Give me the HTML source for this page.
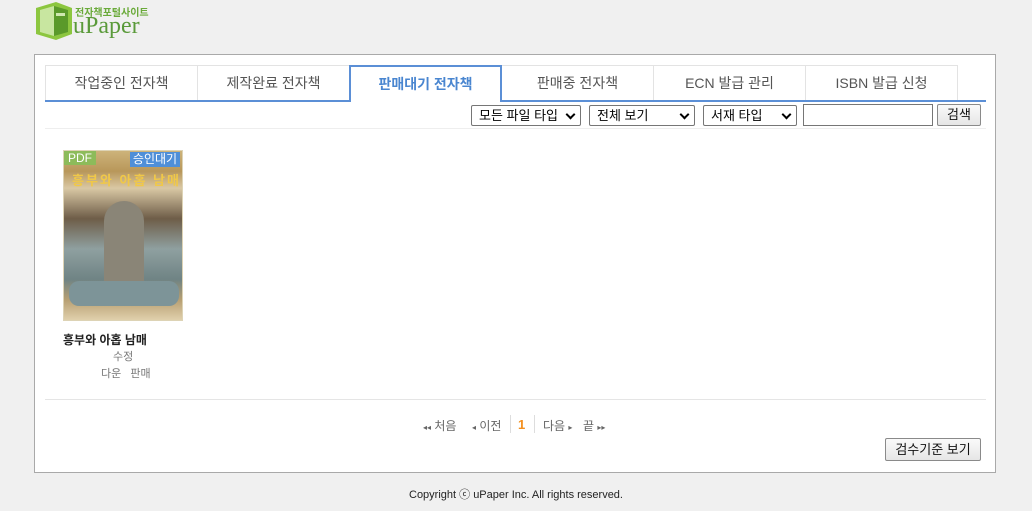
<!DOCTYPE html><html><head><meta charset="utf-8"><style>
*{box-sizing:border-box;margin:0;padding:0}
body{width:1032px;height:511px;background:#f0f0f0;font-family:"Liberation Sans","Noto Sans CJK KR",sans-serif;font-size:12px;color:#333;position:relative;overflow:hidden}
.abs{position:absolute}
.box{left:34px;top:54px;width:962px;height:419px;background:#fff;border:1px solid #a9a9a9}
.tab{top:65px;height:36px;width:153px;border:1px solid #e3e3e3;border-bottom:none;background:#fff;text-align:center;line-height:34px;font-size:14px;color:#555}
.tab.act{border:2px solid #5b8fd6;border-bottom:none;color:#4a86d0;font-weight:bold;height:37px;background:#fff;z-index:2}
.sel{top:105px;height:21px;border:1px solid #767676;border-radius:2px;background:#fff;font-size:13px;padding-left:7px;line-height:19px;color:#000}
.sel:after{content:"";position:absolute;right:6px;top:5px;width:5px;height:5px;border-right:2px solid #000;border-bottom:2px solid #000;transform:rotate(45deg)}
.btn{border:1px solid #8a8a8a;border-radius:2px;background:linear-gradient(#fafafa,#e6e6e6);text-align:center;font-size:13px;color:#111}
.pg{position:absolute;top:417px;font-size:12px;color:#666;white-space:nowrap}
</style></head><body>
<svg class="abs" style="left:34px;top:0" width="40" height="40" viewBox="0 0 40 40"><polygon points="2,8 22,2 38,8 38,34 22,40 2,34" fill="#8cc63f"/><polygon points="6,10 20,6 20,36 6,32" fill="#c8e6a0"/><polygon points="20,6 34,10 34,32 20,36" fill="#5a9a2a"/><rect x="22" y="13" width="9" height="3" fill="#cfe8b0"/></svg>
<div class="abs" style="left:75px;top:4px;font-size:10px;font-weight:bold;color:#6aaa3a">전자책포털사이트</div>
<div class="abs" style="left:73px;top:13px;font-family:'Liberation Serif',serif;font-size:24px;color:#5a9a3a;line-height:26px">uPaper</div>
<div class="abs box"></div>
<div class="abs tab" style="left:45px">작업중인 전자책</div>
<div class="abs tab" style="left:197px">제작완료 전자책</div>
<div class="abs tab act" style="left:349px">판매대기 전자책</div>
<div class="abs tab" style="left:501px">판매중 전자책</div>
<div class="abs tab" style="left:653px">ECN 발급 관리</div>
<div class="abs tab" style="left:805px">ISBN 발급 신청</div>
<div class="abs" style="left:45px;top:100px;width:941px;height:2px;background:#5b8fd6;z-index:1"></div>
<div class="abs sel" style="left:471px;width:110px">모든 파일 타입</div>
<div class="abs sel" style="left:589px;width:106px">전체 보기</div>
<div class="abs sel" style="left:703px;width:94px">서재 타입</div>
<div class="abs" style="left:803px;top:104px;width:130px;height:22px;border:1px solid #767676"></div>
<div class="abs btn" style="left:937px;top:104px;width:44px;height:22px;line-height:20px">검색</div>
<div class="abs" style="left:45px;top:128px;width:941px;height:1px;background:#eee"></div>
<div class="abs" style="left:63px;top:150px;width:120px;height:171px;border:1px solid #ddd3b5;background:linear-gradient(180deg,#cdb37a 0%,#b8975a 12%,#d9c8a4 22%,#6e5d48 40%,#8fa0a0 58%,#6f8384 76%,#b79f72 88%,#e0d0ac 100%);overflow:hidden">
<div class="abs" style="left:0;top:0;width:32px;height:14px;background:#8dbb5a;color:#fff;font-size:12px;line-height:14px;text-align:center">PDF</div>
<div class="abs" style="right:2px;top:1px;width:50px;height:15px;background:#4f8fd8;color:#fff;font-size:12px;line-height:15px;text-align:center">승인대기</div>
<div class="abs" style="left:8px;top:19px;font-size:13px;font-weight:bold;color:#f0c848;letter-spacing:2px">흥부와 아홉 남매</div>
<div class="abs" style="left:40px;top:50px;width:40px;height:90px;border-radius:20px 20px 4px 4px;background:#8a8577"></div>
<div class="abs" style="left:5px;top:130px;width:110px;height:25px;border-radius:10px;background:#7d9498"></div>
</div>
<div class="abs" style="left:63px;top:331px;font-weight:bold;font-size:12px;color:#222">흥부와 아홉 남매</div>
<div class="abs" style="left:113px;top:348px;font-size:11px;color:#777">수정</div>
<div class="abs" style="left:101px;top:365px;font-size:11px;color:#777">다운&nbsp;&nbsp;&nbsp;판매</div>
<div class="abs" style="left:45px;top:399px;width:941px;height:1px;background:#e5e5e5"></div>
<div class="pg" style="left:423px"><span style="font-size:8px">◂◂</span> 처음</div>
<div class="pg" style="left:472px"><span style="font-size:8px">◂</span> 이전</div>
<div class="abs" style="left:510px;top:415px;width:1px;height:18px;background:#ddd"></div>
<div class="pg" style="left:518px;color:#f39020;font-weight:bold;font-size:13px">1</div>
<div class="abs" style="left:534px;top:415px;width:1px;height:18px;background:#ddd"></div>
<div class="pg" style="left:543px">다음 <span style="font-size:8px">▸</span></div>
<div class="pg" style="left:583px">끝 <span style="font-size:8px">▸▸</span></div>
<div class="abs btn" style="left:885px;top:438px;width:96px;height:23px;line-height:21px">검수기준 보기</div>
<div class="abs" style="left:0;top:486px;width:1032px;text-align:center;font-size:11px;color:#222">Copyright ⓒ uPaper Inc. All rights reserved.</div>
</body></html>
